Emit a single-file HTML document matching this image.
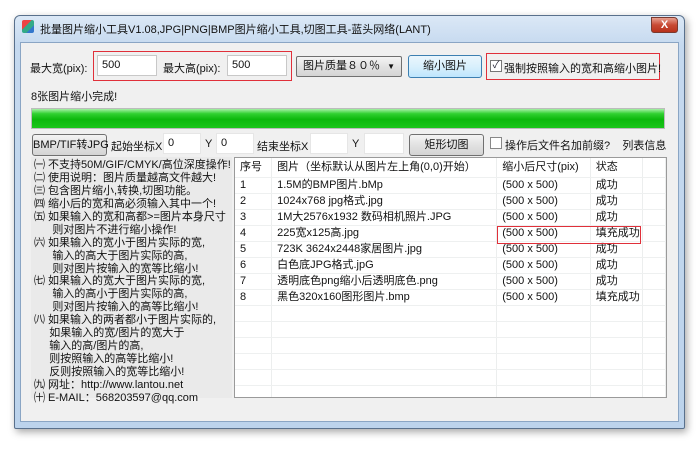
<!DOCTYPE html><html><head><meta charset="utf-8"><style>
*{box-sizing:border-box;margin:0;padding:0}
body{width:700px;height:451px;background:#fff;position:relative;overflow:hidden;font-family:"Liberation Sans","Noto Sans CJK SC",sans-serif;font-size:11px;color:#111}
.a{position:absolute;white-space:nowrap}
.win{left:14px;top:15px;width:671px;height:414px;border:1px solid #59708c;border-radius:6px 6px 2px 2px;background:linear-gradient(#dbe8f6,#c5d9ef 30px,#bcd3ec);box-shadow:2px 3px 8px rgba(0,0,0,.35)}
.client{left:20px;top:42px;width:659px;height:380px;background:#f0f0f0;border:1px solid #8aa5c4}
.inp{background:#fff;border:1px solid #c8c8c8;height:21px;padding:3px 4px}
.btn{border:1px solid #707070;border-radius:3px;background:linear-gradient(#f4f4f4,#e2e2e2 50%,#d4d4d4);text-align:center;line-height:19px;height:21px}
.red{border:1px solid #e0303a}
table{border-collapse:collapse;font-size:11px}
td{height:16px;border-bottom:1px solid #eef0f0;border-right:1px solid #eceeee;padding-left:5px;white-space:nowrap;line-height:15px}
.ln div{height:12.95px;line-height:13px;font-size:11px;white-space:nowrap;overflow:visible}
</style></head><body>
<div class="a win"></div>
<div class="a" style="left:22px;top:20px;width:12px;height:13px;background:linear-gradient(135deg,#e44 0,#e44 40%,#3a8 40%,#3a8 70%,#37c 70%);border-radius:2px"></div>
<div class="a" style="left:40px;top:21px;font-size:11px;color:#111">批量图片缩小工具V1.08,JPG|PNG|BMP图片缩小工具,切图工具-蓝头网络(LANT)</div>
<div class="a" style="left:651px;top:17px;width:27px;height:16px;border-radius:0 4px 3px 3px;background:linear-gradient(#e8a090,#c84a34 50%,#b8321c);border:1px solid #7a3a30;color:#fff;font-weight:bold;text-align:center;line-height:14px;font-size:11px">X</div>
<div class="a client"></div>

<div class="a" style="left:30px;top:60px">最大宽(pix):</div>
<div class="a red" style="left:93px;top:51px;width:199px;height:30px"></div>
<div class="a inp" style="left:97px;top:55px;width:60px">500</div>
<div class="a" style="left:163px;top:60px">最大高(pix):</div>
<div class="a inp" style="left:227px;top:55px;width:60px">500</div>
<div class="a btn" style="left:296px;top:56px;width:106px;border-radius:2px;text-align:left;padding-left:6px">图片质量８０％ <span style="float:right;margin-right:6px;font-size:8px">▼</span></div>
<div class="a btn" style="left:408px;top:55px;width:74px;height:23px;border-color:#3c7fb1;background:linear-gradient(#eaf6fd,#d9f0fc 50%,#bee6fd);line-height:21px">缩小图片</div>
<div class="a red" style="left:486px;top:53px;width:174px;height:27px"></div>
<div class="a" style="left:490px;top:60px;width:12px;height:12px;border:1px solid #777;background:#fff;font-size:10px;line-height:10px;text-align:center;color:#223">✓</div>
<div class="a" style="left:504px;top:60px">强制按照输入的宽和高缩小图片!</div>
<div class="a" style="left:31px;top:88px">8张图片缩小完成!</div>
<div class="a" style="left:31px;top:108px;width:634px;height:21px;border:1px solid #bcbcbc;background:linear-gradient(#a6f0a6,#30d030 25%,#0cb80c 55%,#1ac61a)"></div>

<div class="a btn" style="left:32px;top:134px;width:75px;height:22px;line-height:20px">BMP/TIF转JPG</div>
<div class="a" style="left:111px;top:138px">起始坐标X</div>
<div class="a inp" style="left:163px;top:133px;width:38px;border-color:#e6e6e6">0</div>
<div class="a" style="left:205px;top:138px">Y</div>
<div class="a inp" style="left:216px;top:133px;width:38px;border-color:#e6e6e6">0</div>
<div class="a" style="left:257px;top:138px">结束坐标X</div>
<div class="a inp" style="left:310px;top:133px;width:38px;border-color:#e6e6e6"></div>
<div class="a" style="left:352px;top:138px">Y</div>
<div class="a inp" style="left:364px;top:133px;width:40px;border-color:#e6e6e6"></div>
<div class="a btn" style="left:409px;top:134px;width:75px;height:22px;line-height:20px">矩形切图</div>
<div class="a" style="left:490px;top:137px;width:12px;height:12px;border:1px solid #888;background:#fff"></div>
<div class="a" style="left:505px;top:137px">操作后文件名加前缀?&nbsp;&nbsp;&nbsp;&nbsp;列表信息</div>

<div class="a" style="left:31px;top:157px;width:201px;height:241px;background:#eaeaea"></div>
<div class="a ln" style="left:34px;top:159px">
<div>㈠ 不支持50M/GIF/CMYK/高位深度操作!</div><div>㈡ 使用说明：图片质量越高文件越大!</div><div>㈢ 包含图片缩小,转换,切图功能。</div><div>㈣ 缩小后的宽和高必须输入其中一个!</div><div>㈤ 如果输入的宽和高都>=图片本身尺寸</div><div>&nbsp;&nbsp;&nbsp;&nbsp;&nbsp;&nbsp;则对图片不进行缩小操作!</div><div>㈥ 如果输入的宽小于图片实际的宽,</div><div>&nbsp;&nbsp;&nbsp;&nbsp;&nbsp;&nbsp;输入的高大于图片实际的高,</div><div>&nbsp;&nbsp;&nbsp;&nbsp;&nbsp;&nbsp;则对图片按输入的宽等比缩小!</div><div>㈦ 如果输入的宽大于图片实际的宽,</div><div>&nbsp;&nbsp;&nbsp;&nbsp;&nbsp;&nbsp;输入的高小于图片实际的高,</div><div>&nbsp;&nbsp;&nbsp;&nbsp;&nbsp;&nbsp;则对图片按输入的高等比缩小!</div><div>㈧ 如果输入的两者都小于图片实际的,</div><div>&nbsp;&nbsp;&nbsp;&nbsp;&nbsp;如果输入的宽/图片的宽大于</div><div>&nbsp;&nbsp;&nbsp;&nbsp;&nbsp;输入的高/图片的高,</div><div>&nbsp;&nbsp;&nbsp;&nbsp;&nbsp;则按照输入的高等比缩小!</div><div>&nbsp;&nbsp;&nbsp;&nbsp;&nbsp;反则按照输入的宽等比缩小!</div><div>㈨ 网址：http://www.lantou.net</div><div>㈩ E-MAIL：568203597@qq.com</div></div>

<div class="a" style="left:234px;top:157px;width:433px;height:241px;background:#fff;border:1px solid #9a9a9a;overflow:hidden">
<table>
<tr style="background:#fff"><td style="width:37px;height:19px">序号</td><td style="width:226px">图片（坐标默认从图片左上角(0,0)开始）</td><td style="width:94px">缩小后尺寸(pix)</td><td style="width:52px">状态</td><td style="width:24px"></td></tr>
<tr><td>1</td><td>1.5M的BMP图片.bMp</td><td>(500 x 500)</td><td>成功</td><td></td></tr>
<tr><td>2</td><td>1024x768 jpg格式.jpg</td><td>(500 x 500)</td><td>成功</td><td></td></tr>
<tr><td>3</td><td>1M大2576x1932 数码相机照片.JPG</td><td>(500 x 500)</td><td>成功</td><td></td></tr>
<tr><td>4</td><td>225宽x125高.jpg</td><td>(500 x 500)</td><td>填充成功</td><td></td></tr>
<tr><td>5</td><td>723K 3624x2448家居图片.jpg</td><td>(500 x 500)</td><td>成功</td><td></td></tr>
<tr><td>6</td><td>白色底JPG格式.jpG</td><td>(500 x 500)</td><td>成功</td><td></td></tr>
<tr><td>7</td><td>透明底色png缩小后透明底色.png</td><td>(500 x 500)</td><td>成功</td><td></td></tr>
<tr><td>8</td><td>黑色320x160图形图片.bmp</td><td>(500 x 500)</td><td>填充成功</td><td></td></tr>
<tr><td></td><td></td><td></td><td></td><td></td></tr><tr><td></td><td></td><td></td><td></td><td></td></tr><tr><td></td><td></td><td></td><td></td><td></td></tr><tr><td></td><td></td><td></td><td></td><td></td></tr><tr><td></td><td></td><td></td><td></td><td></td></tr><tr><td></td><td></td><td></td><td></td><td></td></tr>
</table></div>
<div class="a red" style="left:497px;top:226px;width:144px;height:18px"></div>
</body></html>
